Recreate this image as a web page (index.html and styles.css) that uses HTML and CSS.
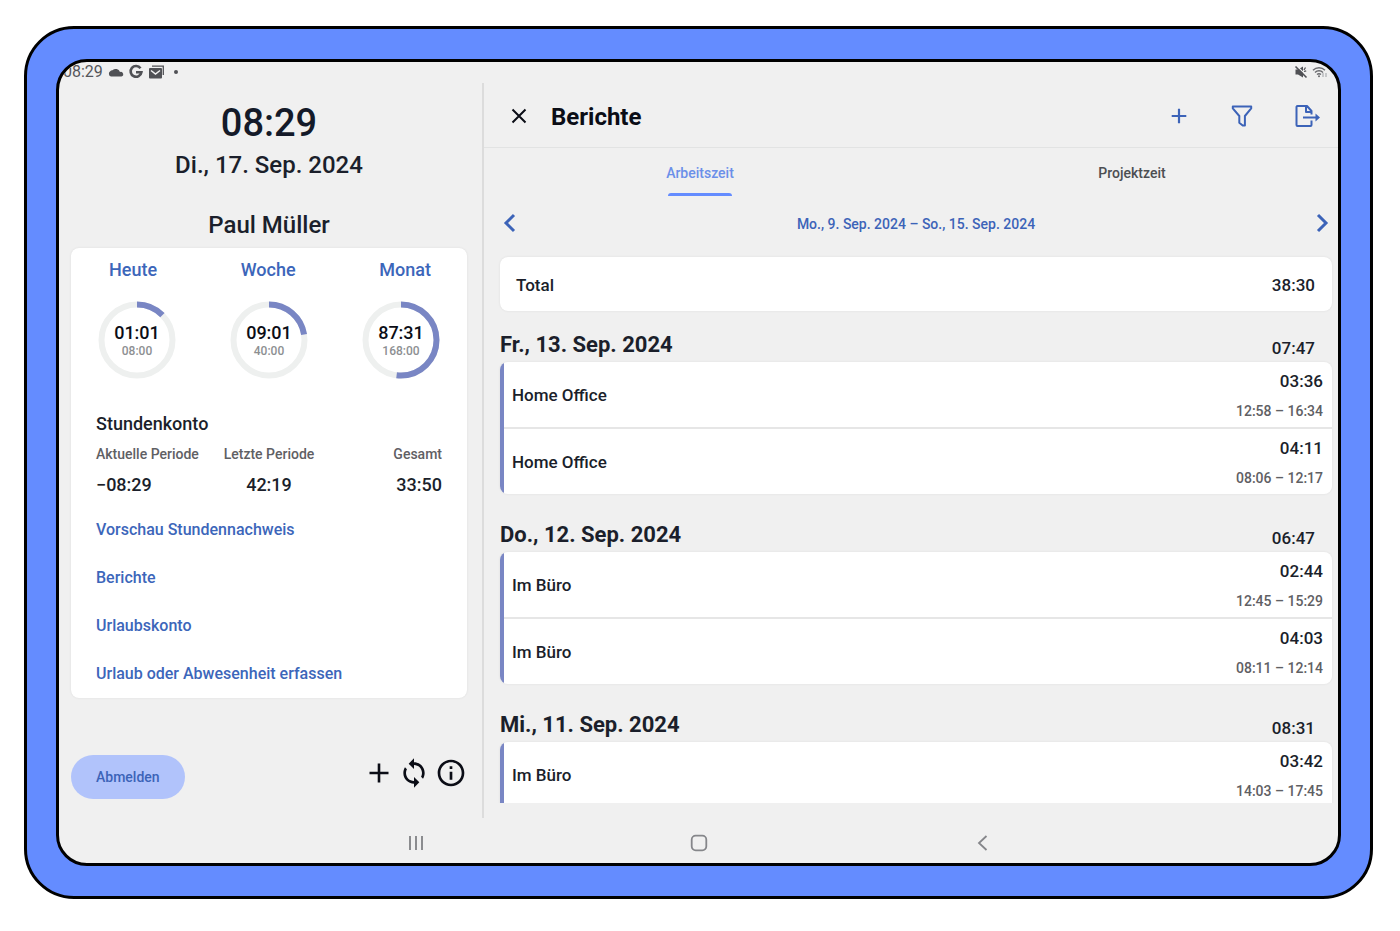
FILE: index.html
```html
<!DOCTYPE html>
<html lang="de">
<head>
<meta charset="utf-8">
<meta name="viewport" content="width=device-width, initial-scale=1">
<title>Berichte</title>
<link rel="stylesheet" href="styles.css">
</head>
<body>
<div class="device">
  <div class="screen">
    <div class="statusbar">
      <span class="status-time">08:29</span>
      <svg width="16" height="16" viewBox="0 0 16 16" aria-hidden="true"><path fill="#505155" d="M3 12.500a2.900 2.900 0 0 1-.5-5.400 2 2 0 0 1 2-.9 4.600 4.600 0 0 1 7.500 1.700A2.400 2.400 0 0 1 13.500 12.500z"/></svg>
      <svg width="16" height="16" viewBox="0 0 16 16" aria-hidden="true"><path fill="none" stroke="#505155" stroke-width="2.600" d="M12.500 4.300A5.400 5.400 0 1 0 13.400 8.200H8"/></svg>
      <svg width="18" height="16" viewBox="0 0 18 16" aria-hidden="true"><path fill="none" stroke="#505155" stroke-width="1.300" d="M4 2.200h11.300V11"/><rect x="1" y="4" width="13" height="10.500" rx="1" fill="#505155"/><path d="m3 6.500 4.500 3.500L12 6.500" fill="none" stroke="#f0f0f0" stroke-width="1.500"/></svg>
      <span class="status-dot"></span>
      <span class="status-right">
        <svg width="14" height="14" viewBox="0 0 14 14" aria-hidden="true"><path fill="#505155" d="M1.500 4.600H4L9 1.500v11L4 9.500H1.500z"/><path d="m10 5 1.500-2.500M10 6.500l2.200-.7" stroke="#505155" stroke-width="1.300"/><path d="m2.500 .8 10.500 10.200" stroke="#f0f0f0" stroke-width="1.200"/><path d="m1.500 1.500 11 11" stroke="#505155" stroke-width="1.600"/></svg>
        <svg width="16" height="14" viewBox="0 0 16 14" aria-hidden="true"><g fill="none" stroke="#6a6b6f" stroke-width="1.400"><path d="M1 5.200a8.500 8.500 0 0 1 12 0M3 7.500a5.600 5.600 0 0 1 8 0M5 9.600a3 3 0 0 1 4 0"/></g><circle cx="7" cy="11.300" r="1" fill="#6a6b6f"/><path d="M11 8v4M14 12V8" stroke="#b0b2b5" stroke-width="1.300"/></svg>
      </span>
    </div>

    <div class="app">
      <aside class="sidebar">
        <div class="clock">08:29</div>
        <div class="today">Di., 17. Sep. 2024</div>
        <h2 class="user">Paul Müller</h2>

        <section class="card summary">
          <div class="ring-labels"><a href="#heute">Heute</a><a href="#woche">Woche</a><a href="#monat">Monat</a></div>
          <div class="rings">
            <div class="ring">
              <svg viewBox="0 0 78 78" aria-hidden="true"><circle class="track" cx="39" cy="39" r="35.500"/><circle class="value" cx="39" cy="39" r="35.500" pathLength="100" stroke-dasharray="12.700 100"/></svg>
              <div class="ring-text"><strong>01:01</strong><span>08:00</span></div>
            </div>
            <div class="ring">
              <svg viewBox="0 0 78 78" aria-hidden="true"><circle class="track" cx="39" cy="39" r="35.500"/><circle class="value" cx="39" cy="39" r="35.500" pathLength="100" stroke-dasharray="22.500 100"/></svg>
              <div class="ring-text"><strong>09:01</strong><span>40:00</span></div>
            </div>
            <div class="ring">
              <svg viewBox="0 0 78 78" aria-hidden="true"><circle class="track" cx="39" cy="39" r="35.500"/><circle class="value" cx="39" cy="39" r="35.500" pathLength="100" stroke-dasharray="52 100"/></svg>
              <div class="ring-text"><strong>87:31</strong><span>168:00</span></div>
            </div>
          </div>

          <h3 class="account-title">Stundenkonto</h3>
          <dl class="account">
            <div><dt>Aktuelle Periode</dt><dd>−08:29</dd></div>
            <div><dt>Letzte Periode</dt><dd>42:19</dd></div>
            <div><dt>Gesamt</dt><dd>33:50</dd></div>
          </dl>

          <nav class="links">
            <a href="#vorschau">Vorschau Stundennachweis</a>
            <a href="#berichte">Berichte</a>
            <a href="#urlaubskonto">Urlaubskonto</a>
            <a href="#abwesenheit">Urlaub oder Abwesenheit erfassen</a>
          </nav>
        </section>

        <div class="actions">
          <button class="logout" type="button">Abmelden</button>
          <div class="action-icons">
            <button class="icon" type="button" aria-label="Hinzufügen"><svg width="28" height="32" viewBox="0 0 28 32"><path d="M14 6.500v19M4.500 16h19" stroke="#0b0d16" stroke-width="2.600" fill="none"/></svg></button>
            <button class="icon" type="button" aria-label="Synchronisieren"><svg width="32" height="32" viewBox="0 0 24 24"><path fill="#0b0d16" d="M12 4V1L8 5l4 4V6c3.310 0 6 2.690 6 6 0 1.010-.25 1.970-.7 2.800l1.460 1.460C19.540 15.030 20 13.570 20 12c0-4.420-3.580-8-8-8zm0 14c-3.310 0-6-2.690-6-6 0-1.010.25-1.970.7-2.800L5.240 7.740C4.460 8.970 4 10.430 4 12c0 4.420 3.580 8 8 8v3l4-4-4-4v3z"/></svg></button>
            <button class="icon" type="button" aria-label="Info"><svg width="32" height="32" viewBox="0 0 24 24"><path fill="#0b0d16" d="M11 7h2v2h-2zm0 4h2v6h-2zm1-9C6.480 2 2 6.480 2 12s4.480 10 10 10 10-4.480 10-10S17.520 2 12 2zm0 18c-4.410 0-8-3.590-8-8s3.590-8 8-8 8 3.590 8 8-3.590 8-8 8z"/></svg></button>
          </div>
        </div>
      </aside>

      <main class="reports">
        <header class="toolbar">
          <button class="icon" type="button" aria-label="Schließen"><svg width="20" height="20" viewBox="0 0 20 20"><path d="m3.500 3.500 13 13m0-13-13 13" stroke="#0b0d16" stroke-width="2" fill="none"/></svg></button>
          <h1>Berichte</h1>
          <div class="tools">
            <button class="icon" type="button" aria-label="Neu"><svg width="24" height="24" viewBox="0 0 24 24"><path d="M12 4.700v14.600M4.700 12h14.600" stroke="#3c63b8" stroke-width="2.200" fill="none"/></svg></button>
            <button class="icon" type="button" aria-label="Filter"><svg width="24" height="24" viewBox="0 0 24 24"><path d="M2.800 2.500h18.400v1.900L14.900 12v9.500h-2.200L9.300 18.800V12L2.800 4.400z" stroke="#3c63b8" stroke-width="2" stroke-linejoin="round" fill="none"/></svg></button>
            <button class="icon" type="button" aria-label="Exportieren"><svg width="28" height="24" viewBox="0 0 28 24"><g stroke="#3c63b8" stroke-width="2" stroke-linejoin="round" fill="none"><path d="M18.500 10.500V7L14 2H4.500a1 1 0 0 0-1 1v18a1 1 0 0 0 1 1h13a1 1 0 0 0 1-1v-4.500M13 2.500V8h5.500M10 13.500h15"/></g><path d="m22.500 9.500 4.500 4-4.500 4z" fill="#3c63b8"/></svg></button>
          </div>
        </header>

        <nav class="tabs">
          <a class="tab active" href="#arbeitszeit">Arbeitszeit</a>
          <a class="tab" href="#projektzeit">Projektzeit</a>
        </nav>

        <div class="period">
          <button class="icon" type="button" aria-label="Vorherige Woche"><svg width="20" height="24" viewBox="0 0 20 24"><path d="m14 4-8 8 8 8" stroke="#3c63b8" stroke-width="3" fill="none"/></svg></button>
          <span>Mo., 9. Sep. 2024 – So., 15. Sep. 2024</span>
          <button class="icon" type="button" aria-label="Nächste Woche"><svg width="20" height="24" viewBox="0 0 20 24"><path d="m6 4 8 8-8 8" stroke="#3c63b8" stroke-width="3" fill="none"/></svg></button>
        </div>

        <div class="list">
          <div class="card total"><span>Total</span><span>38:30</span></div>

          <section class="day">
            <header class="day-head"><h2>Fr., 13. Sep. 2024</h2><span>07:47</span></header>
            <div class="card entries">
              <div class="entry"><span>Home Office</span><div class="times"><span>03:36</span><small>12:58 – 16:34</small></div></div>
              <div class="entry"><span>Home Office</span><div class="times"><span>04:11</span><small>08:06 – 12:17</small></div></div>
            </div>
          </section>

          <section class="day">
            <header class="day-head"><h2>Do., 12. Sep. 2024</h2><span>06:47</span></header>
            <div class="card entries">
              <div class="entry"><span>Im Büro</span><div class="times"><span>02:44</span><small>12:45 – 15:29</small></div></div>
              <div class="entry"><span>Im Büro</span><div class="times"><span>04:03</span><small>08:11 – 12:14</small></div></div>
            </div>
          </section>

          <section class="day">
            <header class="day-head"><h2>Mi., 11. Sep. 2024</h2><span>08:31</span></header>
            <div class="card entries continued">
              <div class="entry"><span>Im Büro</span><div class="times"><span>03:42</span><small>14:03 – 17:45</small></div></div>
            </div>
          </section>
        </div>
      </main>
    </div>

    <nav class="navbar">
      <button class="icon" type="button" aria-label="Letzte Apps"><svg width="20" height="20" viewBox="0 0 20 20"><path d="M4 3v14M10 3v14M16 3v14" stroke="#8b8c8f" stroke-width="2"/></svg></button>
      <button class="icon" type="button" aria-label="Startseite"><svg width="20" height="20" viewBox="0 0 20 20"><rect x="2.700" y="2.700" width="14.600" height="14.600" rx="4" stroke="#85868a" stroke-width="1.800" fill="none"/></svg></button>
      <button class="icon" type="button" aria-label="Zurück"><svg width="20" height="20" viewBox="0 0 20 20"><path d="m13.500 3-7.500 7 7.500 7" stroke="#85868a" stroke-width="1.800" fill="none"/></svg></button>
    </nav>
  </div>
</div>
</body>
</html>
```
FILE: styles.css
```css
* { box-sizing: border-box; }

body {
  margin: 0;
  height: 100vh;
  padding: 26px 27px 32px 24px;
  background: #fff;
  color: #1b1f2b;
  font-family: Roboto, "Liberation Sans", sans-serif;
  font-weight: 500;
}

h1, h2, h3, dl, dd { margin: 0; font-weight: 500; }
a { color: #3c66ba; text-decoration: none; }
.icon {
  display: flex;
  padding: 0;
  border: 0;
  background: none;
}
svg { display: block; }

.device {
  height: 100%;
  padding: 30px 29px;
  border: 3px solid #000;
  border-radius: 50px;
  background: #648cff;
}
.screen {
  display: flex;
  flex-direction: column;
  height: 100%;
  overflow: hidden;
  border: 3px solid #000;
  border-radius: 31px;
  background: #f0f0f0;
}

.statusbar {
  display: flex;
  align-items: center;
  gap: 4px;
  height: 21px;
  padding: 0 10px 2px 4px;
  color: #55565a;
}
.status-time { font-size: 16px; font-weight: 400; line-height: 20px; margin-right: 1px; }
.status-dot { width: 4px; height: 4px; margin-left: 4px; border-radius: 50%; background: #505155; }
.status-right { display: flex; gap: 4px; margin-left: auto; }

/* The app bleeds slightly past the rounded bezel. */
.app {
  display: grid;
  flex: 1;
  grid-template-columns: 1fr 2fr;
  min-height: 0;
  margin: 0 -10px 0 -7px;
}

.card {
  border-radius: 8px;
  background: #fff;
  box-shadow: 0 0 2px #d8d8d8;
}

.sidebar {
  display: flex;
  flex-direction: column;
  padding: 16px 15px 19px 19px;
  border-right: 2px solid #dcdcdc;
}
.clock { font-size: 38px; line-height: 48px; text-align: center; color: #141a29; }
.today { font-size: 24px; line-height: 36px; text-align: center; }
.user { margin-top: 24px; font-size: 24px; line-height: 36px; text-align: center; }

.summary { margin-top: 5px; }
.ring-labels {
  display: flex;
  justify-content: space-between;
  padding: 10px 36px 0 38px;
  font-size: 18px;
  line-height: 24px;
}
.rings { display: grid; grid-template-columns: repeat(3, 1fr); margin-top: 19px; }
.ring { display: grid; place-items: center; }
.ring > * { grid-area: 1 / 1; }
.ring svg { width: 78px; height: 78px; transform: rotate(-90deg); }
.ring circle { fill: none; stroke-width: 6; }
.track { stroke: #eef0ef; }
.value { stroke: #7986c4; }
.ring-text { padding-top: 2px; text-align: center; }
.ring-text strong { display: block; color: #0b0d16; font-size: 18px; font-weight: 500; line-height: 20px; }
.ring-text span { display: block; color: #8d8f92; font-size: 12px; line-height: 16px; }

.account-title { margin: 33px 25px 0; font-size: 18px; line-height: 24px; }
.account {
  display: grid;
  grid-template-columns: 1fr auto 1fr;
  margin: 8px 25px 0;
}
.account div { text-align: center; }
.account div:first-child { text-align: left; }
.account div:last-child { text-align: right; }
.account dt { color: #5f6064; font-size: 14px; line-height: 20px; }
.account dd { margin-top: 9px; font-size: 18px; line-height: 24px; }

.links {
  display: flex;
  flex-direction: column;
  margin-top: 9px;
  padding: 0 25px;
  font-size: 16px;
  line-height: 48px;
}

.actions {
  display: flex;
  align-items: center;
  justify-content: space-between;
  margin-top: auto;
}
.logout {
  height: 44px;
  padding: 0 25px;
  border: 0;
  border-radius: 22px;
  background: #b1c3fb;
  color: #3c63b8;
  font: 500 14px/20px Roboto, "Liberation Sans", sans-serif;
}
.action-icons { display: flex; gap: 5px; margin-bottom: 8px; }

.reports { display: flex; flex-direction: column; min-width: 0; min-height: 0; padding-bottom: 15px; }
.toolbar {
  display: flex;
  align-items: center;
  height: 65px;
  flex: none;
  padding: 2px 27px 0 25px;
  border-bottom: 1px solid #e2e3e3;
}
.toolbar h1 { margin-left: 22px; padding-top: 1px; color: #0b0d16; font-size: 24px; font-weight: 700; line-height: 32px; }
.tools { display: flex; gap: 39px; margin-left: auto; }

.tabs { display: grid; flex: none; grid-template-columns: 1fr 1fr; height: 48px; }
.tab {
  position: relative;
  height: 48px;
  color: #4c4e52;
  font-size: 14px;
  line-height: 50px;
  text-align: center;
}
.tab.active { color: #6b8fe9; }
.tab.active::after {
  position: absolute;
  bottom: 0;
  left: 50%;
  width: 64px;
  height: 3px;
  margin-left: -32px;
  border-radius: 3px 3px 0 0;
  background: #648cff;
  content: "";
}

.period {
  display: flex;
  align-items: center;
  flex: none;
  justify-content: space-between;
  height: 54px;
  padding: 0 16px;
  color: #3c63b8;
  font-size: 14px;
  line-height: 20px;
}
.period span { padding-top: 2px; }

.list { flex: 1; min-height: 0; overflow: hidden; padding: 7px 16px 0; }
.total { display: flex; justify-content: space-between; padding: 16px 17px 14px 16px; font-size: 17px; line-height: 24px; }
.day { margin-bottom: 20px; }
.total + .day { margin-top: 13px; }
.day-head { display: flex; align-items: center; justify-content: space-between; padding: 5px 17px 1px 0; }
.day-head h2 { font-size: 22px; font-weight: 700; line-height: 32px; }
.day-head span { margin-top: 5px; font-size: 17px; line-height: 24px; }
.entries {
  overflow: hidden;
  padding-left: 4px;
  background: linear-gradient(to right, #7986c4 4px, #fff 4px);
}
.continued { border-radius: 8px 8px 0 0; }
.entry {
  display: flex;
  align-items: center;
  justify-content: space-between;
  padding: 7px 9px 6px 8px;
  font-size: 17px;
}
.entry + .entry { border-top: 2px solid #e6e6e6; }
.times { text-align: right; }
.times span { display: block; line-height: 24px; }
.times small { display: block; margin-top: 8px; color: #5f6064; font-size: 14px; line-height: 20px; }

.navbar {
  display: grid;
  flex: none;
  grid-template-columns: repeat(3, 1fr);
  height: 45px;
  margin: 0 -10px 0 -8px;
  padding: 5px 17.4% 0;
  align-items: center;
  justify-items: center;
}
```
